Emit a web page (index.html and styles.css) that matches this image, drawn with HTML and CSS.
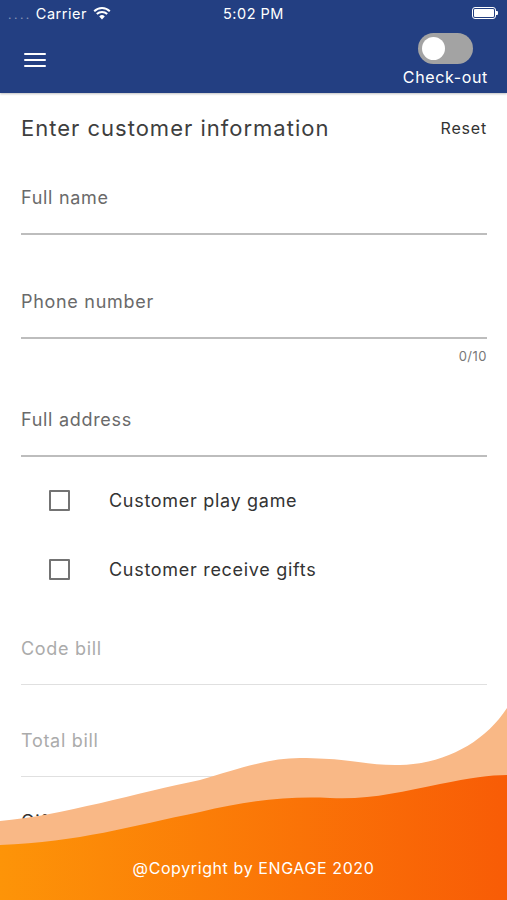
FILE: index.html
```html
<!DOCTYPE html>
<html>
<head>
<meta charset="utf-8">
<link rel="stylesheet" href="styles.css">
</head>
<body>
<header class="header">
  <div class="status">
    <div class="status-left">
      <span class="dots">....</span>
      <span>Carrier</span>
      <svg class="wifi" width="18" height="13" viewBox="0 0 18 13"><path d="M9 12.5 L6.2 9.4 A4 4 0 0 1 11.8 9.4 Z" fill="#fff"/><path d="M3.8 7 A7.5 7.5 0 0 1 14.2 7" stroke="#fff" stroke-width="2" fill="none"/><path d="M1.2 4.3 A11 11 0 0 1 16.8 4.3" stroke="#fff" stroke-width="2" fill="none"/></svg>
    </div>
    <div class="status-time">5:02 PM</div>
    <div class="status-right">
      <div class="battery"><div class="battery-fill"></div></div>
      <div class="battery-tip"></div>
    </div>
  </div>
  <div class="nav">
    <div class="burger"><span></span><span></span><span></span></div>
    <div class="checkout">
      <div class="toggle"><div class="knob"></div></div>
      <div class="checkout-label">Check-out</div>
    </div>
  </div>
</header>
<main class="form">
  <div class="title-row">
    <div class="title">Enter customer information</div>
    <div class="reset">Reset</div>
  </div>
  <div class="field f1"><div class="label">Full name</div></div>
  <div class="field f2"><div class="label">Phone number</div></div>
  <div class="counter">0/10</div>
  <div class="field f3"><div class="label">Full address</div></div>
  <div class="check c1"><div class="box"></div><div class="check-text">Customer play game</div></div>
  <div class="check c2"><div class="box"></div><div class="check-text">Customer receive gifts</div></div>
  <div class="field disabled f4"><div class="label">Code bill</div></div>
  <div class="field disabled f5"><div class="label">Total bill</div></div>
  <div class="field gift"><div class="label dark">Gift</div></div>
</main>
<footer class="wave">
  <svg class="wave-svg" width="507" height="200" viewBox="0 0 507 200" preserveAspectRatio="none">
    <defs>
      <linearGradient id="og" x1="0" y1="0" x2="1" y2="0">
        <stop offset="0" stop-color="#fd9408"/>
        <stop offset="1" stop-color="#f85c06"/>
      </linearGradient>
    </defs>
    <path d="M0 121 C 60 116, 140 92, 200 80 C 240 68, 270 58, 300 58 C 350 58, 370 66, 400 65 C 445 64, 485 42, 507 8 L507 200 L0 200 Z" fill="#f9b886"/>
    <path d="M0 145 C 80 142, 130 126, 200 112 C 250 100, 290 96, 330 98 C 370 100, 400 92, 440 84 C 470 78, 490 75, 507 75 L507 200 L0 200 Z" fill="url(#og)"/>
  </svg>
  <div class="copyright">@Copyright by ENGAGE 2020</div>
</footer>
</body>
</html>
```
FILE: styles.css
```css
* { box-sizing: border-box; }
html, body { margin: 0; padding: 0; }
body {
  width: 507px;
  height: 900px;
  overflow: hidden;
  position: relative;
  background: #fff;
  font-family: Inter, Roboto, "Noto Sans", sans-serif;
}
.header {
  background: #233f82;
  height: 93px;
  color: #fff;
  box-shadow: 0 1px 2px rgba(0,0,0,0.25);
  position: relative;
  z-index: 2;
}
.status {
  height: 26px;
  display: flex;
  align-items: center;
  justify-content: space-between;
  padding: 0 9px 0 8px;
  font-size: 14.5px;
  letter-spacing: 0.5px;
  position: relative;
}
.status-left { display: flex; align-items: center; gap: 4px; width: 120px; }
.dots { color: #8a97b8; font-size: 12px; letter-spacing: 2.5px; margin-top: 2px; }
.wifi { margin-left: 2px; }
.status-time { position: absolute; left: 0; right: 0; text-align: center; pointer-events: none; }
.status-right { display: flex; align-items: center; }
.battery {
  width: 24px; height: 12px; border: 1.5px solid #fff; border-radius: 3px; padding: 1px;
}
.battery-fill { width: 100%; height: 100%; background: #fff; border-radius: 1px; }
.battery-tip { width: 2px; height: 4px; background: #fff; border-radius: 0 1px 1px 0; }
.nav {
  height: 67px;
  display: flex;
  justify-content: space-between;
  padding: 0 19px 0 24px;
}
.burger {
  display: flex; flex-direction: column; gap: 4px; margin-top: 27px; width: 22px;
}
.burger span { display: block; height: 2px; background: #fff; border-radius: 1px; }
.checkout { display: flex; flex-direction: column; align-items: center; padding-top: 7px; }
.toggle {
  width: 55px; height: 31px; border-radius: 16px; background: #a3a3a3;
  padding: 4px 0 0 4px;
}
.knob { width: 23px; height: 23px; border-radius: 50%; background: #fff; }
.checkout-label { font-size: 16px; margin-top: 3px; letter-spacing: 0.65px; }

.form { padding: 0 20px 0 21px; color: #333; }
.title-row {
  display: flex; justify-content: space-between; align-items: center;
  padding-top: 20px; height: 50px;
}
.title { font-size: 22px; color: #3e3e3e; line-height: 30px; letter-spacing: 1px; }
.reset { font-size: 16px; color: #333; letter-spacing: 0.8px; }
.field {
  border-bottom: 2px solid #bdbdbd;
  padding-bottom: 23px;
}
.label { font-size: 18px; line-height: 24px; color: #6a6a6a; letter-spacing: 0.7px; }
.f1 { margin-top: 43px; }
.f2 { margin-top: 55px; }
.counter { text-align: right; font-size: 13px; line-height: 16px; color: #777; margin-top: 9px; letter-spacing: 0.5px; }
.f3 { margin-top: 44px; }
.check { display: flex; align-items: center; height: 40px; padding-left: 28px; }
.c1 { margin-top: 23px; }
.c2 { margin-top: 29px; }
.box { width: 21px; height: 21px; border: 2px solid #737373; border-radius: 1px; }
.check-text { margin-left: 39px; font-size: 18px; color: #333; letter-spacing: 0.7px; }
.disabled { border-bottom: 1px solid #e0e0e0; }
.disabled .label { color: #ababab; }
.f4 { margin-top: 48px; }
.f5 { margin-top: 44px; }
.gift { margin-top: 33px; border: none; }
.label.dark { color: #333; }

.wave {
  position: absolute; left: 0; bottom: 0; width: 507px; height: 200px; z-index: 3;
}
.wave-svg { display: block; position: absolute; left: 0; top: 0; }
.copyright {
  position: absolute; left: 0; right: 0; top: 157px; text-align: center;
  color: #fff; font-size: 16px; line-height: 22px; letter-spacing: 0.6px;
}
```
